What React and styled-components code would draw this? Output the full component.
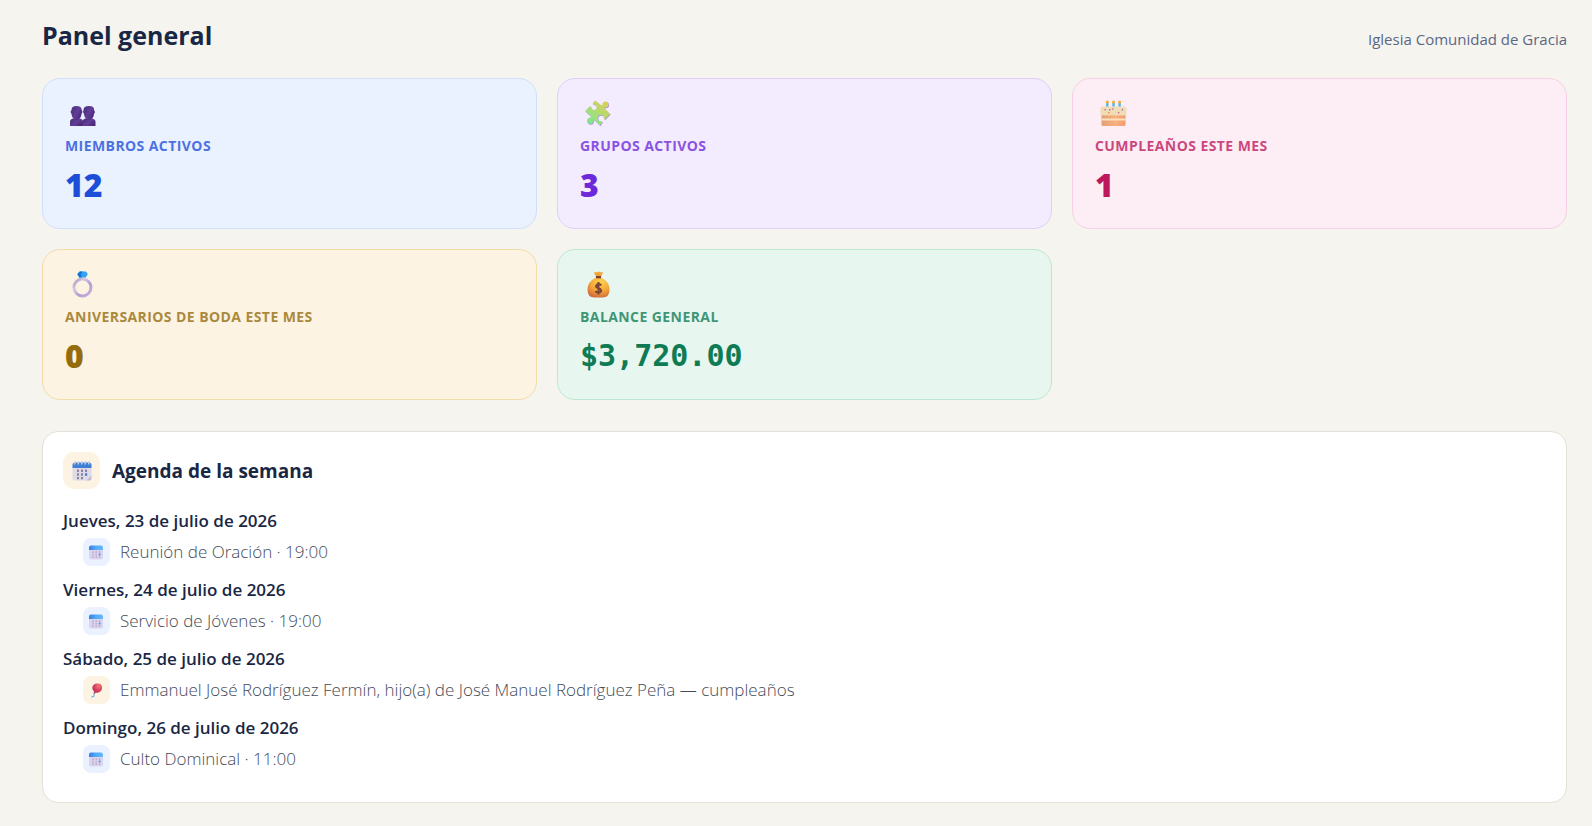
import React from "react";
import styled, { createGlobalStyle } from "styled-components";

const GlobalStyle = createGlobalStyle`
  * {
    box-sizing: border-box;
  }

  body {
    margin: 0;
    background-color: #f5f4ef;
    color: #1a2744;
    font-family: "Segoe UI", "Open Sans", sans-serif;
  }
`;

const Page = styled.main`
  min-height: 100vh;
  padding: 17px 25px 22px 42px;
`;

const Header = styled.header`
  display: flex;
  justify-content: space-between;
  align-items: baseline;
  margin-bottom: 25px;
`;

const Title = styled.h1`
  margin: 0;
  font-size: 25px;
  line-height: 36px;
  font-weight: 700;
`;

const Church = styled.span`
  font-size: 15px;
  line-height: 20px;
  color: #5b6785;
`;

const Cards = styled.section`
  display: grid;
  grid-template-columns: repeat(3, 1fr);
  gap: 20px;
  margin-bottom: 31px;
`;

const tones = {
  blue: { bg: "#eaf1ff", border: "#cfe0fc", color: "#1d4ed8" },
  purple: { bg: "#f3ebfe", border: "#decffa", color: "#6d28d9" },
  pink: { bg: "#fdedf5", border: "#f8cfe6", color: "#be185d" },
  amber: { bg: "#fcf3e3", border: "#f2dca8", color: "#946c0c" },
  green: { bg: "#e7f6ef", border: "#bce8d1", color: "#0f7b55" },
};

const Card = styled.article`
  display: flex;
  flex-direction: column;
  padding: 21px 22px 23px;
  border: 1px solid ${(props) => tones[props.$tone].border};
  border-radius: 18px;
  background-color: ${(props) => tones[props.$tone].bg};
  color: ${(props) => tones[props.$tone].color};

  svg {
    width: 36px;
    height: 28px;
    overflow: visible;
  }
`;

const CardLabel = styled.h2`
  margin: 8px 0 9px;
  font-size: 14px;
  line-height: 20px;
  font-weight: 700;
  letter-spacing: 0.03em;
  text-transform: uppercase;
  opacity: 0.78;
`;

const CardValue = styled.div`
  font-family: ${(props) =>
    props.$mono ? '"DejaVu Sans Mono", monospace' : "inherit"};
  font-size: ${(props) => (props.$mono ? "30px" : "32px")};
  line-height: 40px;
  font-weight: ${(props) => (props.$mono ? 700 : 800)};
`;

const Panel = styled.section`
  padding: 20px 20px 29px;
  border: 1px solid #e3e0d6;
  border-radius: 16px;
  background-color: #fff;
`;

const PanelHeader = styled.div`
  display: flex;
  align-items: center;
  gap: 12px;
  margin-bottom: 19px;
`;

const PanelTitle = styled.h2`
  margin: 0;
  font-size: 19px;
  line-height: 28px;
  font-weight: 700;
`;

const Chip = styled.span`
  display: flex;
  justify-content: center;
  align-items: center;
  flex-shrink: 0;
  width: ${(props) => (props.$large ? "37px" : "27px")};
  height: ${(props) => (props.$large ? "37px" : "28px")};
  border-radius: ${(props) => (props.$large ? "11px" : "8px")};
  background-color: ${(props) => tones[props.$tone].bg};

  svg {
    width: ${(props) => (props.$large ? "20px" : "15px")};
    height: ${(props) => (props.$large ? "20px" : "15px")};
  }
`;

const Days = styled.div`
  display: flex;
  flex-direction: column;
  gap: 11px;
`;

const DayTitle = styled.h3`
  margin: 0 0 4px;
  font-size: 17px;
  line-height: 26px;
  font-weight: 600;
`;

const Events = styled.ul`
  margin: 0;
  padding: 0 0 0 20px;
  list-style: none;
`;

const Event = styled.li`
  display: flex;
  align-items: center;
  gap: 10px;
  font-size: 17px;
  line-height: 28px;
  font-weight: 350;
  color: #444b57;
`;

const PeopleIcon = () => (
  <svg viewBox="0 0 36 28" aria-hidden="true">
    <defs>
      <linearGradient id="people" x1="0" y1="0" x2="1" y2="0.6">
        <stop offset="0" stopColor="#46306f" />
        <stop offset="0.6" stopColor="#633c99" />
        <stop offset="1" stopColor="#4a2976" />
      </linearGradient>
    </defs>
    <g fill="url(#people)">
      <path d="M5 26v-4q0-3.500 4-3.500h5q4 0 4 3.500v4z" />
      <path d="M17.500 26v-4q0-3.500 4-3.500h4.500q4.500 0 4.500 3.500v4z" />
      <path d="M6.500 10Q6.500 6 11.500 6t5.200 4l.8 2-1 2q-.5 5.500-5 5.500t-5-5.500l-1-2z" />
      <path d="M18.500 10Q18.500 6 24 6t5 4l1 2-1 2q-.5 5.500-5 5.500t-5-5.500l-1-2z" />
    </g>
  </svg>
);

const PuzzleIcon = () => (
  <svg viewBox="0 0 36 28" aria-hidden="true">
    <defs>
      <linearGradient id="puzzle" x1="0" y1="1" x2="0.8" y2="0">
        <stop offset="0" stopColor="#6ee7a0" />
        <stop offset="0.5" stopColor="#a9dd76" />
        <stop offset="1" stopColor="#dcd052" />
      </linearGradient>
    </defs>
    <path
      transform="translate(0.6 0.7)"
      fill="#b490d4"
      d="M15 .5l6 4.500q1.500 1 1.500-.5 0-3 3-3t3 3-3.300 3q-1.500 0-.7 1l5.500 5.500-5 5q-1 1-1-.7-.3-3.300-3-3.300-3.300 0-3.300 3t3.300 3.300q2 0 1 1L20 25.500l-5.500-5.500q-1-1-1 .6-.4 3.600-3.300 3.400T7 21t3.200-3.500q1.800-.2.800-1L5 11l4.500-4.500q1-1 1.300.8.6 3 3.200 2.700t2.700-2.800T14 4.500q-2-.2-1.100-1.600z"
    />
    <path
      fill="url(#puzzle)"
      d="M15 .5l6 4.500q1.500 1 1.500-.5 0-3 3-3t3 3-3.300 3q-1.500 0-.7 1l5.500 5.500-5 5q-1 1-1-.7-.3-3.300-3-3.300-3.300 0-3.300 3t3.300 3.300q2 0 1 1L20 25.500l-5.500-5.500q-1-1-1 .6-.4 3.600-3.300 3.400T7 21t3.200-3.500q1.800-.2.800-1L5 11l4.500-4.500q1-1 1.300.8.6 3 3.200 2.700t2.700-2.800T14 4.500q-2-.2-1.100-1.600z"
    />
  </svg>
);

const CakeIcon = () => (
  <svg viewBox="-1 -1 36 28" aria-hidden="true">
    <defs>
      <linearGradient id="sponge" x1="0" y1="0" x2="1" y2="0">
        <stop offset="0" stopColor="#e2a077" />
        <stop offset="0.6" stopColor="#fbb07d" />
        <stop offset="1" stopColor="#ee9a70" />
      </linearGradient>
    </defs>
    <path fill="url(#sponge)" d="M5.500 11h24v12.500q0 1.500-1.500 1.500H7q-1.500 0-1.500-1.500z" />
    <path stroke="#f9e2bd" strokeWidth="2" d="M5.500 18.500h24" />
    <path
      fill="#f0dcb5"
      d="M4.500 8q0-2.500 2.500-2.500h21Q30.500 5.500 30.500 8v6q-1 1-2.500 0-1.500 1.500-3 0-1.500 1-3.500 0-1.500 1.500-3.500 0-2 1-3.500 0-2 1.500-3.500 0-2 1-3.500 0-2 1-3 0z"
    />
    <path stroke="#51b9df" strokeWidth="2.400" d="M11.300 2v3.500M17.500 2v3.500M23.600 2v3.500" />
    <g fill="#f9a825">
      <circle cx="11.300" cy="1" r="1.500" />
      <circle cx="17.500" cy="1" r="1.500" />
      <circle cx="23.600" cy="1" r="1.500" />
    </g>
    <g strokeWidth="1.200" strokeLinecap="round">
      <path stroke="#cf5b9f" d="M9 8.500l.4.400M22.500 11.500l.5.400M16.500 7.800l.4.300" />
      <path stroke="#8c62c4" d="M13.500 9l.4-.3M26.500 8.500l-.3.400" />
      <path stroke="#e0803f" d="M12.500 12l.5-.4" />
    </g>
  </svg>
);

const RingIcon = () => (
  <svg viewBox="0 -1 36 28" aria-hidden="true">
    <defs>
      <linearGradient id="band" x1="0" y1="0" x2="1" y2="1">
        <stop offset="0" stopColor="#a58cc0" />
        <stop offset="0.3" stopColor="#d5cbe4" />
        <stop offset="0.6" stopColor="#b59bd3" />
        <stop offset="1" stopColor="#c9b4dc" />
      </linearGradient>
    </defs>
    <circle cx="17.500" cy="15.500" r="8.500" fill="none" stroke="url(#band)" strokeWidth="3" />
    <path fill="#32a4f5" d="M14.500-.5h6.500l1.800 2.500-2 3.500h-6.500l-2-3.500z" />
    <path fill="#1673d1" d="M12.300 2h3.500l1 3.500h-2.500zM15 -.5h3l-2 2.500h-3.500z" />
  </svg>
);

const MoneyIcon = () => (
  <svg viewBox="-1 -1 36 28" aria-hidden="true">
    <defs>
      <radialGradient id="bag" cx="0.6" cy="0.2" r="0.9">
        <stop offset="0" stopColor="#ffd34f" />
        <stop offset="0.5" stopColor="#f6a83a" />
        <stop offset="1" stopColor="#c9603a" />
      </radialGradient>
    </defs>
    <path fill="#f4a535" d="M13 .5q1.500-1 3 0Q17.500-1.500 19 .5q1.500-1 3 0L20 5h-5z" />
    <path fill="url(#bag)" d="M14 6h7q7.500 4 7.500 11.500 0 8-7 8h-8q-7 0-7-8Q6.500 10 14 6z" />
    <path fill="#7a4435" d="M15 4h5v2.300h-5z" />
    <path
      fill="none"
      stroke="#7a4435"
      strokeWidth="2"
      d="M17.500 10v12.500M20.300 13.500q-1-1.500-2.800-1.500t-2.500 2q0 1.500 2.500 2.200t2.700 2.300q-.2 2-2.700 2t-2.800-1.700"
    />
  </svg>
);

const SpiralCalendarIcon = () => (
  <svg viewBox="0 0 20 20" aria-hidden="true">
    <path fill="#dfd9e8" d="M.5 5h19v10l-4.500 4.500h-12q-2.500 0-2.500-2.500z" />
    <path fill="#c4b9d2" d="M19.500 14.500 14.500 19.500h3q2 0 2-2z" />
    <path fill="#3f7fd6" d="M.5 4q0-2.500 2.500-2.500h14q2.500 0 2.500 2.500v3H.5z" />
    <path stroke="#c3cfe4" strokeWidth="1.400" d="M3.500 0l-1 3.500M7 0L6 3.500M10.500 0l-1 3.500M14 0l-1 3.500M17.500 0l-1 3.500" />
    <path stroke="#8c8599" strokeWidth="2" strokeDasharray="2.400 1.400" d="M6 8.500v9.800M10 8.500v9.800" />
    <path stroke="#8c8599" strokeWidth="2" strokeDasharray="2.400 1.400" d="M14 8.500v2.400" />
    <path fill="#2b82dc" d="M13 12.300h2.200v2.400H13z" />
  </svg>
);

const CalendarIcon = () => (
  <svg viewBox="0 0 15 15" aria-hidden="true">
    <defs>
      <linearGradient id="calTop" x1="0" y1="0" x2="1" y2="0">
        <stop offset="0" stopColor="#3b7ce0" />
        <stop offset="0.5" stopColor="#52acf8" />
        <stop offset="1" stopColor="#66b8fa" />
      </linearGradient>
    </defs>
    <path fill="#dcd3ee" d="M0 4h14v8.500q0 2-2 2H2q-2 0-2-2z" />
    <path fill="url(#calTop)" d="M0 2.500q0-2 2-2h10q2 0 2 2V5H0z" />
    <g stroke="#b3a9cb" strokeWidth="1.300" strokeDasharray="1.700 .8">
      <path d="M4 6.300v6.700M7.200 6.300v6.700M10.500 6.300v6.700" />
    </g>
    <path fill="#3d9af0" d="M9.800 8.600h1.700v1.700H9.800z" />
  </svg>
);

const BalloonIcon = () => (
  <svg viewBox="0 0 15 15" aria-hidden="true">
    <defs>
      <radialGradient id="balloon" cx="0.65" cy="0.25" r="0.8">
        <stop offset="0" stopColor="#f6787c" />
        <stop offset="0.5" stopColor="#d9435f" />
        <stop offset="1" stopColor="#b02f5c" />
      </radialGradient>
    </defs>
    <path
      fill="none"
      stroke="#62abf0"
      strokeWidth="1.100"
      d="M5.800 9.500q-1.500 1.500-.8 2.800t-2.600 1.800"
    />
    <path
      fill="url(#balloon)"
      d="M8.500.5q4.500 0 4.500 4.300 0 3.200-3 4.500-1.700.7-3.500.5l-.8.900-1-.9.600-1Q3.300 7.200 3.300 5q.2-4.500 5.200-4.500z"
    />
  </svg>
);

const cards = [
  { tone: "blue", icon: <PeopleIcon />, label: "Miembros activos", value: "12" },
  { tone: "purple", icon: <PuzzleIcon />, label: "Grupos activos", value: "3" },
  { tone: "pink", icon: <CakeIcon />, label: "Cumpleaños este mes", value: "1" },
  { tone: "amber", icon: <RingIcon />, label: "Aniversarios de boda este mes", value: "0" },
  { tone: "green", icon: <MoneyIcon />, label: "Balance general", value: "$3,720.00", mono: true },
];

const days = [
  { date: "Jueves, 23 de julio de 2026", events: [{ text: "Reunión de Oración · 19:00" }] },
  { date: "Viernes, 24 de julio de 2026", events: [{ text: "Servicio de Jóvenes · 19:00" }] },
  {
    date: "Sábado, 25 de julio de 2026",
    events: [
      {
        birthday: true,
        text: "Emmanuel José Rodríguez Fermín, hijo(a) de José Manuel Rodríguez Peña — cumpleaños",
      },
    ],
  },
  { date: "Domingo, 26 de julio de 2026", events: [{ text: "Culto Dominical · 11:00" }] },
];

const App = () => {
  return (
    <>
      <GlobalStyle />
      <Page>
        <Header>
          <Title>Panel general</Title>
          <Church>Iglesia Comunidad de Gracia</Church>
        </Header>
        <Cards>
          {cards.map((card) => (
            <Card key={card.label} $tone={card.tone}>
              {card.icon}
              <CardLabel>{card.label}</CardLabel>
              <CardValue $mono={card.mono}>{card.value}</CardValue>
            </Card>
          ))}
        </Cards>
        <Panel>
          <PanelHeader>
            <Chip $tone="amber" $large>
              <SpiralCalendarIcon />
            </Chip>
            <PanelTitle>Agenda de la semana</PanelTitle>
          </PanelHeader>
          <Days>
            {days.map((day) => (
              <div key={day.date}>
                <DayTitle>{day.date}</DayTitle>
                <Events>
                  {day.events.map((event) => (
                    <Event key={event.text}>
                      <Chip $tone={event.birthday ? "amber" : "blue"}>
                        {event.birthday ? <BalloonIcon /> : <CalendarIcon />}
                      </Chip>
                      {event.text}
                    </Event>
                  ))}
                </Events>
              </div>
            ))}
          </Days>
        </Panel>
      </Page>
    </>
  );
};

export default App;
